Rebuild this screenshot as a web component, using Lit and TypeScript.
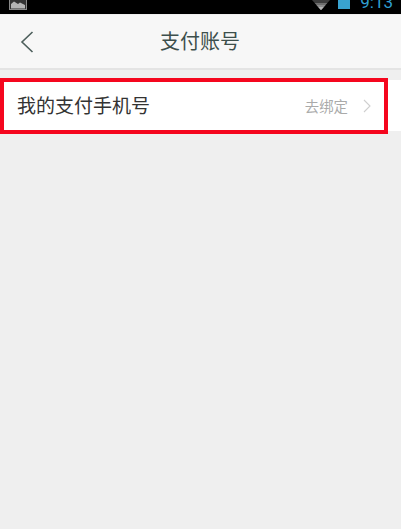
import { LitElement, html, css } from "lit";
import { customElement } from "lit/decorators.js";

@customElement("app-root")
export class AppRoot extends LitElement {
  static styles = css`
    :host {
      display: block;
      width: 405px;
      height: 529px;
      background: #fff;
      overflow: hidden;
      font-family: "Noto Sans CJK SC", "Liberation Sans", sans-serif;
    }
    .screen {
      width: 401px;
      height: 529px;
      background: #efefef;
      display: flex;
      flex-direction: column;
    }
    .status {
      height: 14px;
      background: #000;
      display: flex;
      align-items: flex-start;
      overflow: hidden;
      flex: none;
    }
    .pic { margin-left: 9px; display: block; }
    .right {
      margin-left: auto;
      margin-right: 8px;
      display: flex;
      align-items: flex-start;
      height: 14px;
    }
    .wifi { display: block; margin-right: 8px; }
    .batt { width: 12px; height: 9px; background: #39a3d0; margin-right: 9px; }
    .time {
      color: #2f9fd0;
      font: 17px/17px "Roboto", sans-serif;
      margin-top: -6px;
      margin-left: 1px;
    }
    .nav {
      height: 55px;
      background: #f7f7f7;
      border-bottom: 2px solid #e4e4e4;
      box-sizing: border-box;
      display: flex;
      align-items: center;
      justify-content: center;
      position: relative;
      flex: none;
      margin-top: 1px;
    }
    .back { position: absolute; left: 20px; top: 16px; }
    .title { font-size: 20px; line-height: 28px; color: #3d4f4c; margin-left: -1px; margin-top: -2px; }
    .row {
      margin-top: 10px;
      height: 51px;
      background: #fff;
      display: flex;
      align-items: center;
      position: relative;
      flex: none;
      box-sizing: border-box;
      padding: 0 0 0 17px;
    }
    .label { font-size: 19px; line-height: 26px; color: #333; flex: 1; margin-top: -2px; }
    .action { font-size: 14.4px; color: #aaa; margin-right: 15px; margin-top: -1px; }
    .chev { display: block; margin-right: 30px; }
    .mark {
      position: absolute;
      left: 0;
      top: -2px;
      right: 13px;
      bottom: -3px;
      border: 4px solid #f5061e;
      pointer-events: none;
    }
  `;

  render() {
    return html`
      <div class="screen">
        <div class="status">
          <svg class="pic" width="18" height="10" viewBox="0 0 18 10">
            <rect x="0.5" y="-2" width="17" height="11.5" fill="#333" stroke="#8a8a8a"></rect>
            <path d="M2 8.5 V4 L5 1.500 L9 4 L11 2.500 L16 5 V8.500 Z" fill="#b5b5b5"></path>
          </svg>
          <div class="right">
            <svg class="wifi" width="18" height="10" viewBox="0 0 18 10">
              <path d="M0 0 H18 L9 10 Z" fill="#3c3c3c"></path>
              <path d="M2.700 3 H15.300 L9 10 Z" fill="#6e6e6e"></path>
              <path d="M4.500 5 H13.500 L9 10 Z" fill="#8c8c8c"></path>
              <path d="M6.300 7 H11.700 L9 10 Z" fill="#b4b4b4"></path>
            </svg>
            <div class="batt"></div>
            <div class="time">9:13</div>
          </div>
        </div>
        <div class="nav">
          <svg class="back" width="14" height="22" viewBox="0 0 14 22">
            <path d="M12.500 1 L2 11 L12.500 21" fill="none" stroke="#4d5f5c" stroke-width="1.6"></path>
          </svg>
          <div class="title">支付账号</div>
        </div>
        <div class="row">
          <div class="label">我的支付手机号</div>
          <div class="action">去绑定</div>
          <svg class="chev" width="8" height="14" viewBox="0 0 8 14">
            <path d="M1 1 L7 7 L1 13" fill="none" stroke="#cfcfcf" stroke-width="1.1"></path>
          </svg>
          <div class="mark"></div>
        </div>
      </div>
    `;
  }
}
